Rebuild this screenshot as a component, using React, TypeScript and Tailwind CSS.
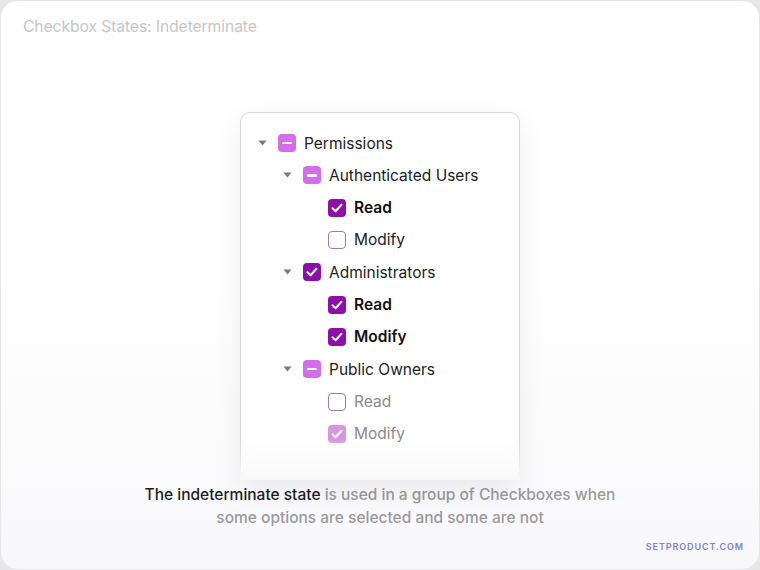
import React from 'react';

type State = 'checked' | 'unchecked' | 'indeterminate' | 'disabledChecked' | 'disabledUnchecked';

type Row = { label: string; level: number; state: State; caret?: boolean; bold?: boolean; muted?: boolean };

const rows: Row[] = [
  { label: 'Permissions', level: 0, state: 'indeterminate', caret: true },
  { label: 'Authenticated Users', level: 1, state: 'indeterminate', caret: true },
  { label: 'Read', level: 2, state: 'checked', bold: true },
  { label: 'Modify', level: 2, state: 'unchecked' },
  { label: 'Administrators', level: 1, state: 'checked', caret: true },
  { label: 'Read', level: 2, state: 'checked', bold: true },
  { label: 'Modify', level: 2, state: 'checked', bold: true },
  { label: 'Public Owners', level: 1, state: 'indeterminate', caret: true },
  { label: 'Read', level: 2, state: 'unchecked', muted: true },
  { label: 'Modify', level: 2, state: 'disabledChecked', muted: true },
];

const Check = () => (
  <svg width="12" height="10" viewBox="0 0 12 10" fill="none">
    <path d="M1.5 5.2L4.6 8.2L10.5 1.8" stroke="white" strokeWidth="2" strokeLinecap="round" strokeLinejoin="round" />
  </svg>
);

const Box: React.FC<{ state: State }> = ({ state }) => {
  if (state === 'indeterminate') {
    return (
      <div className="w-[18px] h-[18px] rounded-[4px] bg-[#d56ce9] flex items-center justify-center">
        <div className="w-[10px] h-[2.5px] rounded-full bg-white" />
      </div>
    );
  }
  if (state === 'checked') {
    return (
      <div className="w-[18px] h-[18px] rounded-[4px] bg-[#8c0faa] flex items-center justify-center">
        <Check />
      </div>
    );
  }
  if (state === 'disabledChecked') {
    return (
      <div className="w-[18px] h-[18px] rounded-[4px] bg-[#d595e3] flex items-center justify-center">
        <Check />
      </div>
    );
  }
  return <div className="w-[18px] h-[18px] rounded-[4px] border-[1.5px] border-[#9b7ca8] bg-white" />;
};

const Caret = () => (
  <svg width="9" height="6" viewBox="0 0 9 6">
    <path d="M0.5 0.5H8.5L4.5 5.5Z" fill="#7a7a7a" />
  </svg>
);

const App: React.FC = () => {
  return (
    <div className="w-[760px] h-[570px] bg-[#e6e6e6] p-px" style={{ fontFamily: 'Inter, "Noto Sans", sans-serif' }}>
      <div className="relative h-full rounded-[17px] bg-gradient-to-b from-white via-white to-[#f8f8fa] flex flex-col overflow-hidden">
        <div className="pl-[22px] pt-[16px] text-[15.7px] text-[#c6c6c6] leading-5 tracking-[-0.1px]">
          Checkbox States: Indeterminate
        </div>

        {/* Tree panel */}
        <div className="relative mx-auto mt-[75px] w-[280px] h-[368px] rounded-[10px] border border-[#d6d6d6] bg-white shadow-[0_10px_30px_rgba(0,0,0,0.07)] pt-[14px] pl-[17px]">
          {rows.map((r, i) => (
            <div key={i} className="h-[32.3px] flex items-center" style={{ paddingLeft: r.level * 25 }}>
              <div className="w-[20px] flex items-center">{r.caret && <Caret />}</div>
              <Box state={r.state} />
              <span
                className={
                  'ml-[8px] text-[15.5px] ' +
                  (r.bold ? 'font-semibold text-[#111]' : r.muted ? 'text-[#8a8a8a]' : 'text-[#222]')
                }
              >
                {r.label}
              </span>
            </div>
          ))}
          <div className="absolute -left-px -right-px -bottom-px h-[42px] bg-gradient-to-b from-white/0 to-[#f9f9fa]" />
        </div>

        <p className="mt-[3px] text-center text-[15.5px] leading-[23px] font-medium text-[#9a9a9a]">
          <span className="text-[#1e1e1e]">The indeterminate state</span> is used in a group of Checkboxes when
          <br />
          some options are selected and some are not
        </p>

        <div className="absolute right-[15px] bottom-[16px] text-[9px] font-semibold tracking-[0.9px] text-[#7c84d4]">
          SETPRODUCT.COM
        </div>
      </div>
    </div>
  );
};

export default App;
